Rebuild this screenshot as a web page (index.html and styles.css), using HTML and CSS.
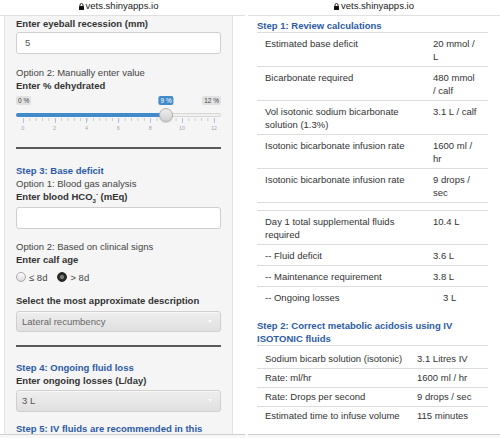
FILE: index.html
```html
<!DOCTYPE html>
<html>
<head>
<meta charset="utf-8">
<link rel="stylesheet" href="styles.css">
</head>
<body>
<div class="screens">
  <section class="screen screen-left">
    <header class="urlbar urlbar-left">
      <svg class="lock" viewBox="0 0 5 7"><path d="M1 3V2a1.5 1.5 0 0 1 3 0v1" fill="none" stroke="#111" stroke-width="0.9"/><rect x="0" y="3" width="5" height="4" rx="0.5" fill="#111"/></svg>
      <span>vets.shinyapps.io</span>
    </header>
    <div class="viewport">
      <div class="well">
        <label class="lbl">Enter eyeball recession (mm)</label>
        <div class="input">5</div>
        <p class="opt opt-gap">Option 2: Manually enter value</p>
        <label class="lbl">Enter % dehydrated</label>
        <div class="slider">
          <span class="sl-tag sl-min">0 %</span>
          <span class="sl-tag sl-max">12 %</span>
          <div class="sl-track"></div>
          <div class="sl-scale">
            <div class="sl-fill" style="width:75%"></div>
            <div class="sl-minor"></div>
            <span class="sl-major" style="left:0%"></span>
            <span class="sl-major" style="left:16.667%"></span>
            <span class="sl-major" style="left:33.333%"></span>
            <span class="sl-major" style="left:50%"></span>
            <span class="sl-major" style="left:66.667%"></span>
            <span class="sl-major" style="left:83.333%"></span>
            <span class="sl-major" style="left:100%"></span>
            <span class="sl-num" style="left:0%">0</span>
            <span class="sl-num" style="left:16.667%">2</span>
            <span class="sl-num" style="left:33.333%">4</span>
            <span class="sl-num" style="left:50%">6</span>
            <span class="sl-num" style="left:66.667%">8</span>
            <span class="sl-num" style="left:83.333%">10</span>
            <span class="sl-num" style="left:100%">12</span>
            <span class="sl-tag sl-val" style="left:75%">9 %</span>
            <span class="sl-handle" style="left:75%"></span>
          </div>
        </div>
        <hr class="rule">
        <h4 class="step step-after-rule">Step 3: Base deficit</h4>
        <p class="opt">Option 1: Blood gas analysis</p>
        <label class="lbl">Enter blood HCO<sub>3</sub><sup>-</sup> (mEq)</label>
        <div class="input input-low"></div>
        <p class="opt opt-gap2">Option 2: Based on clinical signs</p>
        <label class="lbl">Enter calf age</label>
        <div class="radios">
          <span class="radio"><span class="dot dot-off"></span>≤ 8d</span>
          <span class="radio"><span class="dot dot-on"></span>&gt; 8d</span>
        </div>
        <label class="lbl lbl-gap">Select the most approximate description</label>
        <div class="select">Lateral recumbency<span class="caret"></span></div>
        <hr class="rule">
        <h4 class="step step-after-rule2">Step 4: Ongoing fluid loss</h4>
        <label class="lbl">Enter ongoing losses (L/day)</label>
        <div class="select select-dark">3 L<span class="caret"></span></div>
        <h4 class="step step-after-select">Step 5: IV fluids are recommended in this</h4>
      </div>
    </div>
    <footer class="toolbar"></footer>
  </section>

  <section class="screen screen-right">
    <header class="urlbar">
      <svg class="lock" viewBox="0 0 5 7"><path d="M1 3V2a1.5 1.5 0 0 1 3 0v1" fill="none" stroke="#111" stroke-width="0.9"/><rect x="0" y="3" width="5" height="4" rx="0.5" fill="#111"/></svg>
      <span>vets.shinyapps.io</span>
    </header>
    <div class="viewport viewport-right">
      <h4 class="step step-first">Step 1: Review calculations</h4>
      <table class="calc calc-one">
        <colgroup><col class="c1-key"><col class="c1-val"></colgroup>
        <tr><td>Estimated base deficit</td><td class="v">20 mmol / L</td></tr>
        <tr><td>Bicarbonate required</td><td class="v">480 mmol / calf</td></tr>
        <tr><td>Vol isotonic sodium bicarbonate solution (1.3%)</td><td class="v">3.1 L / calf</td></tr>
        <tr><td>Isotonic bicarbonate infusion rate</td><td class="v">1600 ml / hr</td></tr>
        <tr><td>Isotonic bicarbonate infusion rate</td><td class="v">9 drops / sec</td></tr>
        <tr class="spacer"><td></td><td></td></tr>
        <tr><td>Day 1 total supplemental fluids required</td><td class="v">10.4 L</td></tr>
        <tr><td>-- Fluid deficit</td><td class="v">3.6 L</td></tr>
        <tr><td>-- Maintenance requirement</td><td class="v">3.8 L</td></tr>
        <tr><td>-- Ongoing losses</td><td class="v v-shift">3 L</td></tr>
      </table>
      <h4 class="step step-second">Step 2: Correct metabolic acidosis using IV ISOTONIC fluids</h4>
      <table class="calc calc-two">
        <colgroup><col class="c2-key"><col class="c2-val"></colgroup>
        <tr class="first"><td>Sodium bicarb solution (isotonic)</td><td class="v">3.1 Litres IV</td></tr>
        <tr><td>Rate: ml/hr</td><td class="v">1600 ml / hr</td></tr>
        <tr><td>Rate: Drops per second</td><td class="v">9 drops / sec</td></tr>
        <tr><td>Estimated time to infuse volume</td><td class="v">115 minutes</td></tr>
      </table>
    </div>
    <footer class="toolbar"></footer>
  </section>
</div>
</body>
</html>
```
FILE: styles.css
```css
html, body {
  margin: 0;
  padding: 0;
  background: #fff;
}
body {
  font-family: "Liberation Sans", Arial, sans-serif;
  font-size: 9.5px;
  line-height: 13px;
  color: #333;
}
.screens {
  display: flex;
  gap: 3px;
  width: 500px;
  height: 438px;
  overflow: hidden;
}
.screen {
  display: flex;
  flex-direction: column;
  height: 438px;
  flex: none;
}
.screen-left { width: 245px; }
.screen-right { width: 252px; }

.urlbar {
  flex: none;
  height: 15px;
  border-bottom: 1px solid #e0e0e0;
  display: flex;
  justify-content: center;
  align-items: flex-start;
  gap: 2px;
  line-height: 12px;
  color: #222;
}
.urlbar-left { padding-right: 8px; }
.lock {
  width: 5px;
  height: 7px;
  margin-top: 2.5px;
}
.viewport {
  flex: 1;
  min-height: 0;
  overflow: hidden;
}
.toolbar {
  flex: none;
  height: 3px;
  border-top: 1px solid #cfcfcf;
  background: #f7f7f7;
}

/* left well */
.well {
  margin-left: 4px;
  width: 229px;
  box-sizing: border-box;
  padding: 1px 11px 0;
  background: #f5f5f5;
  border: 1px solid #e3e3e3;
  border-top: 0;
  min-height: 432px;
}
.lbl {
  display: block;
  font-weight: bold;
  color: #333;
}
.lbl sub, .lbl sup {
  font-size: 6px;
  line-height: 0;
}
.lbl-gap { margin-top: 11px; }
.input {
  margin-top: 2px;
  height: 22px;
  box-sizing: border-box;
  border: 1px solid #cfcfcf;
  border-radius: 3px;
  background: #fff;
  padding: 0 8px;
  line-height: 20px;
  color: #555;
}
.input-low { margin-top: 4px; }
.opt {
  margin: 0;
  color: #444;
}
.opt-gap { margin-top: 12px; }
.opt-gap2 { margin-top: 11px; }

.slider {
  position: relative;
  height: 42px;
}
.sl-tag {
  position: absolute;
  top: 4px;
  height: 9px;
  line-height: 9px;
  padding: 0 2px;
  font-size: 6.5px;
  border-radius: 2px;
  background: #e1e1e1;
  color: #444;
  white-space: nowrap;
}
.sl-min { left: 0; }
.sl-max { right: 0; }
.sl-val {
  background: #428bca;
  color: #fff;
  transform: translateX(-50%);
}
.sl-track {
  position: absolute;
  left: 0;
  right: 0;
  top: 21px;
  height: 4px;
  box-sizing: border-box;
  border: 1px solid #d6d6d6;
  border-radius: 3px;
  background: #f0f0f0;
}
.sl-scale {
  position: absolute;
  left: 6.7px;
  right: 7px;
  top: 0;
  bottom: 0;
}
.sl-fill {
  position: absolute;
  left: -6.7px;
  top: 21px;
  height: 4px;
  padding-left: 6.7px;
  background: #428bca;
  border-radius: 3px 0 0 3px;
}
.sl-minor {
  position: absolute;
  left: 0;
  top: 26px;
  height: 3px;
  width: calc(100% + 1px);
  background-image: linear-gradient(to right, #c8c8c8 1px, transparent 1px);
  background-size: calc(100% / 30 - 0.0333px) 100%;
}
.sl-major {
  position: absolute;
  top: 26px;
  width: 1px;
  height: 5px;
  background: #a9c6e6;
}
.sl-num {
  position: absolute;
  top: 32px;
  line-height: 8px;
  font-size: 5.5px;
  color: #a8a8a8;
  transform: translateX(-50%);
}
.sl-handle {
  position: absolute;
  top: 16px;
  width: 14px;
  height: 14px;
  margin-left: -7px;
  box-sizing: border-box;
  border-radius: 50%;
  border: 1px solid #b0b0b0;
  background: linear-gradient(#ececec, #d2d2d2);
  box-shadow: 0 1px 1px rgba(0,0,0,0.15);
}

.rule {
  margin: 13px 0 0;
  border: 0;
  border-top: 2px solid #5a5a5a;
  height: 0;
}
.step {
  margin: 0;
  font-size: inherit;
  line-height: 13px;
  font-weight: bold;
  color: #2c5ba6;
}
.step-after-rule { margin-top: 15px; }
.step-after-rule2 { margin-top: 14px; }
.step-after-select { margin-top: 10px; }

.radios {
  margin-top: 5px;
  height: 12px;
  display: flex;
  align-items: center;
  gap: 10px;
  color: #444;
}
.radio {
  display: flex;
  align-items: center;
  gap: 3px;
}
.dot {
  width: 10px;
  height: 10px;
  box-sizing: border-box;
  border-radius: 50%;
}
.dot-off {
  border: 1px solid #a8a8a8;
  background: linear-gradient(#fdfdfd, #dcdcdc);
}
.dot-on {
  background: radial-gradient(circle, #7a7a7a 0, #7a7a7a 1.6px, #2a2a2a 2.6px);
  border: 1px solid #222;
}

.select {
  position: relative;
  margin-top: 4px;
  height: 21px;
  box-sizing: border-box;
  border: 1px solid #d0d0d0;
  border-radius: 3px;
  background: linear-gradient(#eeeeee, #e0e0e0);
  padding: 0 5px;
  line-height: 19px;
  color: #666;
  box-shadow: 0 1px 0 rgba(255,255,255,0.6) inset;
}
.select-dark { margin-top: 3px; height: 22px; line-height: 20px; color: #555; }
.caret {
  position: absolute;
  right: 8px;
  top: 50%;
  margin-top: -2px;
  width: 0;
  height: 0;
  border-left: 2.5px solid transparent;
  border-right: 2.5px solid transparent;
  border-top: 3px solid #fafafa;
}

/* right side */
.viewport-right {
  padding: 0 12px 0 9px;
}
.step-first { margin-top: 3px; }
.step-second { margin-top: 12px; }
.calc {
  width: 231px;
  border-collapse: collapse;
  table-layout: fixed;
}
.calc td {
  border-top: 1px solid #dddddd;
  padding: 4px 8px 3px;
  vertical-align: top;
  line-height: 13px;
  color: #333;
}
.calc td.v { padding-right: 10px; }
.calc td.v-shift { padding-left: 18px; }
.c1-key { width: 168px; }
.c1-val { width: 63px; }
.c2-key { width: 152px; }
.c2-val { width: 79px; }
.calc .spacer td {
  padding: 0;
  height: 7px;
}
.calc-two td {
  padding: 2px 2px 3px 8px;
  white-space: nowrap;
}
.calc-two .first td {
  padding-top: 6px;
}
```
